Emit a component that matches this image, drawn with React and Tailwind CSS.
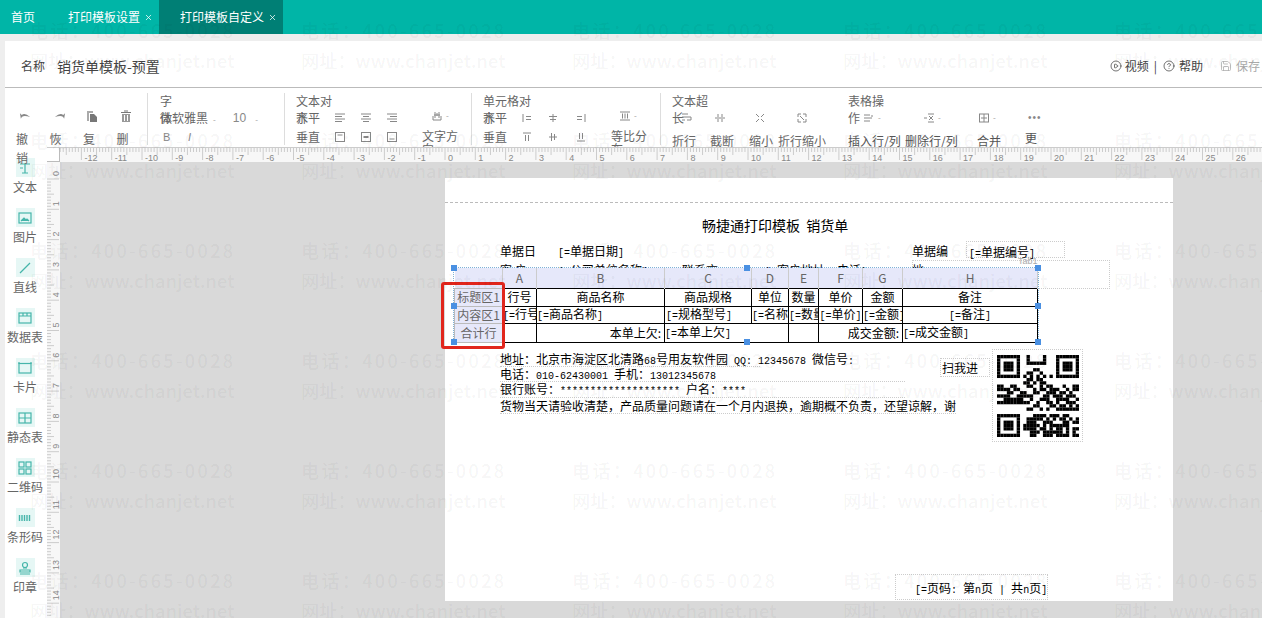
// print template designer page
import { CirclePlay, CircleHelp, Save, X } from "lucide-react";

const CJK = { fontFamily: '"Noto Sans CJK SC", "Noto Sans", sans-serif' };

const QR = [
  "1111111001000010001111111",
  "1000001001000010001000001",
  "1011101001111110001011101",
  "1011101000000000001011101",
  "1011101000011000001011101",
  "1000001001100100001000001",
  "1111111010101010101111111",
  "0000000001101100000000000",
  "0000000011010110000000000",
  "1100110001100101100010011",
  "1111011000010110111001011",
  "0001100110011001110110100",
  "1111001111100011011101110",
  "0011111100100111001111001",
  "1111111111001001101001110",
  "0000000000011000110110101",
  "0000000001100101001111111",
  "0000000000000000000000000",
  "1111111000011110111011000",
  "1000001001111101010110101",
  "1011101001110011100011011",
  "1011101011111010111111000",
  "1011101011110110101101011",
  "1000001000111011111101010",
  "1111111000110011101111011",
];

const QrCode = () => (
  <svg viewBox="0 0 25 25" className="w-[82px] h-[82px]">
    {QR.map((row, y) =>
      row.split("").map((c, x) =>
        c === "1" ? <rect key={x + "-" + y} x={x} y={y} width="1.02" height="1.02" fill="#000" /> : null
      )
    )}
  </svg>
);

const UNIT = 30.3;

const RulerTop = () => {
  const ticks = [];
  for (let i = -130; i <= 270; i++) {
    const x = 385 + (i * UNIT) / 10;
    if (x < 0) continue;
    const h = i % 10 === 0 ? 12 : i % 5 === 0 ? 7 : 4;
    ticks.push(<line key={i} x1={x} x2={x} y1="0" y2={h} stroke="#ccc" strokeWidth="1" />);
  }
  const labels = [];
  for (let i = -12; i <= 26; i++) {
    labels.push(
      <text key={i} x={385 + i * UNIT + 3} y="13" fontSize="9" fill="#888" fontFamily="Liberation Sans">
        {i}
      </text>
    );
  }
  return (
    <svg className="w-[1202px] h-[15px] block">
      {ticks}
      {labels}
    </svg>
  );
};

const RulerLeft = () => {
  const ticks = [];
  for (let i = 0; i <= 150; i++) {
    const y = 17 + (i * UNIT) / 10;
    const w = i % 10 === 0 ? 12 : i % 5 === 0 ? 7 : 4;
    ticks.push(<line key={i} y1={y} y2={y} x1="0" x2={w} stroke="#ccc" strokeWidth="1" />);
  }
  const labels = [];
  for (let i = 0; i <= 14; i++) {
    const y = 17 + i * UNIT - 3;
    labels.push(
      <text
        key={i}
        x="0"
        y="0"
        transform={`translate(12 ${y}) rotate(-90)`}
        fontSize="9"
        fill="#888"
        fontFamily="Liberation Sans"
      >
        {i}
      </text>
    );
  }
  return (
    <svg className="w-[13px] h-[455px] block">
      {ticks}
      {labels}
    </svg>
  );
};

// small grey toolbar glyphs
const G = ({ children, className = "" }) => (
  <svg viewBox="0 0 12 12" fill="none" stroke="#888" strokeWidth="1" className={"w-3 h-3 shrink-0 " + className}>
    {children}
  </svg>
);
const AlignL = () => <G><path d="M1 2h10M1 4.5h7M1 7h10M1 9.5h7" /></G>;
const AlignC = () => <G><path d="M1 2h10M3 4.5h6M1 7h10M3 9.5h6" /></G>;
const AlignR = () => <G><path d="M1 2h10M4 4.5h7M1 7h10M4 9.5h7" /></G>;
const VTop = () => <G><rect x="1.5" y="1.5" width="9" height="9" /><path d="M3.5 4h5" /></G>;
const VMid = () => <G><rect x="1.5" y="1.5" width="9" height="9" /><path d="M3.5 6h5" strokeWidth="2" /></G>;
const VBot = () => <G><rect x="1.5" y="1.5" width="9" height="9" /><path d="M3.5 8h5" /></G>;
const HL = () => <G><path d="M2 2v8M5 4.5h5M5 7.5h5" /></G>;
const HC = () => <G><path d="M6 2v8M2 4.5h8M3 7.5h6" /></G>;
const HR = () => <G><path d="M10 2v8M2 4.5h5M2 7.5h5" /></G>;
const VT = () => <G><path d="M2 2h8M4.5 4v6M7.5 4v6" /></G>;
const VC = () => <G><path d="M2 6h8M4.5 2v8M7.5 3v6" /></G>;
const VB = () => <G><path d="M2 10h8M4.5 2v6M7.5 2v6" /></G>;
const Caret = () => <span className="text-[8px] leading-none text-[#999]">-</span>;

const Divider = () => <div className="w-px h-[52px] mt-[5px] bg-[#ddd] shrink-0" />;

const EditBtn = ({ icon, label }) => (
  <div className="w-[33.5px] shrink-0">
    <div className="h-[20px] mt-[18px] w-[20px] pl-[3px] flex items-center">{icon}</div>
    <div className="w-3 mt-[3px] text-[12px] leading-[19px] text-[#666]">{label}</div>
  </div>
);

const Toolbar = () => (
  <div className="relative z-10 h-[60px] flex pl-[11px] text-[12px] leading-[16px] text-[#666] bg-white border-t border-[#bbb]">
    <div className="flex w-[131px] shrink-0">
      <EditBtn
        label="撤销"
        icon={<svg viewBox="0 0 14 10" className="w-[13px] h-[10px] shrink-0"><path d="M2 8 Q3 3 12 6 Q6 1 3 4 L1 2 Z" fill="#888" /></svg>}
      />
      <EditBtn
        label="恢复"
        icon={<svg viewBox="0 0 14 10" className="w-[13px] h-[10px] shrink-0"><path d="M12 8 Q11 3 2 6 Q8 1 11 4 L13 2 Z" fill="#888" /></svg>}
      />
      <EditBtn
        label="复制"
        icon={<svg viewBox="0 0 12 12" className="w-3 h-3 shrink-0"><path d="M1 1h6v2h-4v8H1z" fill="#aaa" /><path d="M4 4h4l3 3v5H4z" fill="#777" /></svg>}
      />
      <EditBtn
        label="删除"
        icon={<svg viewBox="0 0 12 12" className="w-3 h-3 shrink-0"><path d="M1 2.5h10M4 1h4" stroke="#777" /><path d="M2 4h8v8H2z" fill="#999" /><path d="M4.5 5v6M7.5 5v6" stroke="#fff" /></svg>}
      />
    </div>
    <Divider />

    <div className="w-[136px] pl-[12px] pt-[5px] shrink-0">
      <div>字</div>
      <div className="flex items-center mt-[1px]">
        <span>体</span>
        <span className="-ml-3">微软雅黑</span>
        <span className="ml-[5px]"><Caret /></span>
        <span className="ml-[17px] text-[#888]" style={{ fontFamily: "Liberation Sans" }}>10</span>
        <span className="ml-[9px]"><Caret /></span>
      </div>
      <div className="flex mt-[3px] text-[11px] text-[#888]" style={{ fontFamily: "Liberation Sans" }}>
        <span className="ml-[3px] w-[25px]">B</span>
        <span className="italic">I</span>
      </div>
    </div>
    <Divider />

    <div className="w-[186px] pl-[11px] pt-[5px] flex shrink-0">
      <div className="w-[126px] shrink-0">
        <div>文本对</div>
        <div className="flex items-center mt-[1px]">
          <span>齐</span>
          <span className="-ml-3 w-[38px]">水平</span>
          <span className="w-[26px]"><AlignL /></span>
          <span className="w-[26px]"><AlignC /></span>
          <AlignR />
        </div>
        <div className="flex items-center mt-[3px]">
          <span className="w-[38px]">垂直</span>
          <span className="w-[26px]"><VTop /></span>
          <span className="w-[26px]"><VMid /></span>
          <VBot />
        </div>
      </div>
      <div className="w-[36px] pt-[15px]">
        <div className="flex items-center gap-[3px] pl-[9px] h-[16px]">
          <G><path d="M2 6v4h8V6M4 2v6M8 2v6M6 3v3M3 5h6" /></G>
          <Caret />
        </div>
        <div className="mt-[5px] leading-[13px]">文字方向</div>
      </div>
    </div>
    <Divider />

    <div className="w-[188px] pl-[11px] pt-[5px] flex shrink-0">
      <div className="w-[128px] shrink-0">
        <div>单元格对</div>
        <div className="flex items-center mt-[1px]">
          <span>齐</span>
          <span className="-ml-3 w-[38px]">水平</span>
          <span className="w-[26px]"><HL /></span>
          <span className="w-[28px]"><HC /></span>
          <HR />
        </div>
        <div className="flex items-center mt-[3px]">
          <span className="w-[38px]">垂直</span>
          <span className="w-[26px]"><VT /></span>
          <span className="w-[28px]"><VC /></span>
          <VB />
        </div>
      </div>
      <div className="w-[36px] pt-[15px]">
        <div className="flex items-center gap-[3px] pl-[8px] h-[16px]">
          <G><path d="M1 2h10M1 10h10M3.5 3.5v5M6 3.5v5M8.5 3.5v5" /></G>
          <Caret />
        </div>
        <div className="mt-[5px] leading-[13px]">等比分布</div>
      </div>
    </div>
    <Divider />

    <div className="w-[187px] pl-[11px] pt-[5px] shrink-0">
      <div>文本超</div>
      <div className="flex items-center h-[16px] mt-[1px]">
        <span>长</span>
        <span className="-ml-[3px] w-[33px]"><G><path d="M1 2h6M1 5h9v3H6M1 8h3" /></G></span>
        <span className="w-[40px]"><G><path d="M4 2v3M8 2v3M4 7v3M8 7v3M1 6h10" /></G></span>
        <span className="w-[42px]"><G><path d="M2 2l3 3M10 2L7 5M2 10l3-3M10 10L7 7" /></G></span>
        <G><path d="M2 5V2h3M7 2h3v3M10 7v3H7M5 10H2V7M4 4l4 4" /></G>
      </div>
      <div className="flex mt-[7px]">
        <span className="w-[38px]">折行</span>
        <span className="w-[39px]">截断</span>
        <span className="w-[29px]">缩小</span>
        <span className="whitespace-nowrap">折行缩小</span>
      </div>
    </div>

    <div className="pt-[5px] flex-1">
      <div>表格操</div>
      <div className="flex items-center h-[16px] mt-[1px]">
        <span className="w-[15px]">作</span>
        <span className="flex w-[60px] items-center gap-[3px]"><G><path d="M1 3h6M1 6h8M1 9h6M9 3v2" /></G><Caret /></span>
        <span className="flex w-[55px] items-center gap-[3px]"><G><path d="M1 6h3M5 2h6M5 10h6M6 4l4 4M10 4L6 8" /></G><Caret /></span>
        <span className="flex w-[50px] items-center gap-[3px]"><G><rect x="1.5" y="2" width="9" height="8" /><path d="M6 2v8M3 6h6" /></G><Caret /></span>
        <span className="text-[#888] text-[10px] tracking-[1px]" style={{ fontFamily: "Liberation Sans" }}>•••</span>
      </div>
      <div className="flex mt-[7px] whitespace-nowrap text-[#555]">
        <span className="w-[57px]">插入行/列</span>
        <span className="w-[72px]">删除行/列</span>
        <span className="w-[48px]">合并</span>
        <span className="-mt-[3px]">更</span>
      </div>
    </div>
  </div>
);

const Tool = ({ label, children }) => (
  <div className="h-[50px] flex flex-col items-center">
    <div className="w-[19px] h-[19px] bg-[#e6f7f5] flex items-center justify-center">
      <svg viewBox="0 0 14 14" fill="none" stroke="#45b5aa" strokeWidth="1.2" className="w-[14px] h-[14px]">
        {children}
      </svg>
    </div>
    <div className="text-[12px] leading-[20px] text-[#666] whitespace-nowrap">{label}</div>
  </div>
);

const Sidebar = () => (
  <div className="w-[42px] shrink-0 bg-white pt-[11px] pr-[2px]">
    <Tool label="文本"><path d="M2 3h10M7 3v9M4 12h6M2 7h3" /></Tool>
    <Tool label="图片"><rect x="1" y="2" width="12" height="10" /><path d="M3 10l3-3 2 2 1-1 2 2" fill="#45b5aa" /></Tool>
    <Tool label="直线"><path d="M2 12L12 2" /></Tool>
    <Tool label="数据表"><rect x="1" y="2" width="12" height="10" /><path d="M1 5h12M5 2v3M9 2v3" /></Tool>
    <Tool label="卡片"><rect x="1" y="2.5" width="12" height="9.5" /><path d="M1 1v2M13 1v2" /></Tool>
    <Tool label="静态表"><rect x="1" y="2" width="12" height="10" /><path d="M1 7h12M7 2v10" /></Tool>
    <Tool label="二维码"><rect x="1" y="1" width="5" height="5" /><rect x="8" y="1" width="5" height="5" /><rect x="1" y="8" width="5" height="5" /><rect x="8" y="8" width="5" height="5" /></Tool>
    <Tool label="条形码"><path d="M1.5 4v6M4 4v6M6.5 4v6M9 4v6M11.5 4v6" strokeWidth="1.4" /></Tool>
    <Tool label="印章"><circle cx="7" cy="4" r="2.5" /><path d="M5 7h4M2 9h10v2H2zM2 13h10" /></Tool>
  </div>
);

const td = "border border-black p-0 overflow-hidden whitespace-nowrap text-center text-black font-normal";
const rowHead = "border border-[#bbb] bg-[#e6e8fa] p-0 text-center text-[#666] font-normal whitespace-nowrap overflow-hidden";

const Handle = ({ className }) => <div className={"absolute w-[6px] h-[6px] bg-[#4a90e2] " + className} />;

const Mono = ({ children }) => (
  <span className="text-[10px] leading-none whitespace-pre" style={{ fontFamily: '"Liberation Mono", monospace' }}>
    {children}
  </span>
);

// template field such as [=金额], brackets are half width
const F = ({ children }) => (
  <>
    <Mono>[=</Mono>
    {children}
    <Mono>]</Mono>
  </>
);

const DesignTable = () => (
  <div className="absolute left-[8px] top-[89px] w-[586px] h-[76px] border border-dotted border-[#7fb2d8] z-10">
    <table className="table-fixed border-collapse w-[584px] text-[12px] leading-[14px]">
      <colgroup>
        <col className="w-[48px]" />
        <col className="w-[34px]" />
        <col className="w-[128px]" />
        <col className="w-[87px]" />
        <col className="w-[37px]" />
        <col className="w-[30px]" />
        <col className="w-[44px]" />
        <col className="w-[40px]" />
        <col className="w-[135px]" />
      </colgroup>
      <tbody>
        <tr className="h-[20px]">
          <td className="bg-[#e6e8fa]" />
          {["A", "B", "C", "D", "E", "F", "G", "H"].map((c) => (
            <td key={c} className="bg-[#e6e8fa] border-x border-[#ccc] text-center text-[#666]">{c}</td>
          ))}
        </tr>
        <tr className="h-[18px]">
          <td className={rowHead}>标题区1</td>
          <td className={td}>行号</td>
          <td className={td}>商品名称</td>
          <td className={td}>商品规格</td>
          <td className={td}>单位</td>
          <td className={td}>数量</td>
          <td className={td}>单价</td>
          <td className={td}>金额</td>
          <td className={td}>备注</td>
        </tr>
        <tr className="h-[17px]">
          <td className={rowHead}>内容区1</td>
          <td className={td + " text-left"}><F>行号</F></td>
          <td className={td + " text-left"}><F>商品名称</F></td>
          <td className={td + " text-left pl-[1px]"}><F>规格型号</F></td>
          <td className={td + " text-left"}><F>名称</F></td>
          <td className={td + " text-left"}><F>数量</F></td>
          <td className={td}><F>单价</F></td>
          <td className={td}><F>金额</F></td>
          <td className={td}><F>备注</F></td>
        </tr>
        <tr className="h-[19px]">
          <td className={rowHead}>合计行</td>
          <td className={td} />
          <td className={td + " text-right pr-[3px]"}>本单上欠:</td>
          <td className={td + " text-left"} colSpan="2"><F>本单上欠</F></td>
          <td className={td} />
          <td className={td + " text-right pr-[3px]"} colSpan="2">成交金额:</td>
          <td className={td + " text-left"}><F>成交金额</F></td>
        </tr>
      </tbody>
    </table>
    <Handle className="-left-[3px] -top-[3px]" />
    <Handle className="-left-[3px] top-[35px]" />
    <Handle className="-left-[3px] -bottom-[3px]" />
    <Handle className="left-[290px] -top-[3px]" />
    <Handle className="left-[290px] -bottom-[3px]" />
    <Handle className="-right-[3px] -top-[3px]" />
    <Handle className="-right-[3px] top-[35px]" />
    <Handle className="-right-[3px] -bottom-[3px]" />
  </div>
);

const Paper = () => (
  <div className="relative ml-[385px] mt-[16px] w-[728px] h-[423px] bg-white text-[12px] leading-[16px] text-black whitespace-nowrap">
    <div className="absolute left-0 right-0 top-[24px] border-t border-dashed border-[#bbb]" />
    <div className="absolute left-[257px] top-[37px] text-[14px] leading-[20px]">畅捷通打印模板<span className="whitespace-pre">  </span>销货单</div>

    <div className="absolute left-[55px] top-[65px]">单据日</div>
    <div className="absolute left-[113px] top-[65px]"><F>单据日期</F></div>
    <div className="absolute left-[467px] top-[65px]">单据编</div>
    <div className="absolute left-[521px] top-[63px] w-[99px] h-[17px] pl-[2px] pt-[2px] border border-dotted border-[#ccc]"><F>单据编号</F></div>

    <div className="absolute left-[55px] top-[84px]">客 户</div>
    <div className="absolute left-[113px] top-[84px]"><F>公司单位名称</F></div>
    <div className="absolute left-[237px] top-[84px]">联系方</div>
    <div className="absolute left-[320px] top-[84px]"><F>客户地址、电话</F></div>
    <div className="absolute left-[467px] top-[84px]">地</div>
    <div className="absolute left-[467px] top-[82px] w-[198px] h-[29px] border border-dotted border-[#ccc]" />
    <div className="absolute left-[573px] top-[78px] text-[9px] leading-[10px] text-[#aaa] z-20" style={{ fontFamily: "Liberation Sans" }}>Tab1</div>

    <DesignTable />

    <div className="absolute left-[55px] top-[173px] w-[260px] h-[16px] border-b border-dotted border-[#ccc]">
      地址：北京市海淀区北清路<Mono>68</Mono>号用友软件园<Mono> QQ: 12345678 </Mono>微信号<Mono>:</Mono>
    </div>
    <div className="absolute left-[55px] top-[188px] w-[405px] h-[16px] border-b border-dotted border-[#ccc]">
      电话：<Mono>010-62430001 </Mono>手机：<Mono>13012345678</Mono>
    </div>
    <div className="absolute left-[55px] top-[203px] w-[405px] h-[17px] border-b border-dotted border-[#ccc]">
      银行账号：<Mono>******************** </Mono>户名：<Mono>****</Mono>
    </div>
    <div className="absolute left-[55px] top-[220px] w-[456px] h-[16px] border-b border-dotted border-[#ccc]">
      货物当天请验收清楚，产品质量问题请在一个月内退换，逾期概不负责，还望谅解，谢
    </div>

    <div className="absolute left-[495px] top-[180px] w-[50px] h-[19px] pl-[1px] pt-[1px] border border-dotted border-[#ccc]">扫我进</div>
    <div className="absolute left-[547px] top-[171px] w-[91px] h-[93px] border border-dotted border-[#ccc] flex items-center justify-center">
      <QrCode />
    </div>

    <div className="absolute left-[450px] top-[396px] w-[153px] h-[26px] pl-[19px] pt-[5px] border border-dotted border-[#ccc]">
      <Mono>[=</Mono>页码<Mono>: </Mono>第<Mono>n</Mono>页<Mono> | </Mono>共<Mono>n</Mono>页<Mono>]</Mono>
    </div>

    <div className="absolute left-[-4px] top-[104px] w-[64px] h-[67px] border-[3px] border-[#e1261c] rounded-[3px] z-20" />
  </div>
);

const Watermark = () => (
  <div className="absolute inset-0 z-30 pointer-events-none overflow-hidden pl-[30px] pt-[15px] grid grid-cols-[repeat(5,271px)] auto-rows-[110px] text-[18px] leading-[30px] font-medium text-black/[0.05] whitespace-nowrap">
    {Array.from({ length: 30 }).map((_, i) => (
      <div key={i}>
        <div className="tracking-[2.4px]">电话：400-665-0028</div>
        <div className="tracking-[0.2px]">网址：www.chanjet.net</div>
      </div>
    ))}
  </div>
);

export default function App() {
  return (
    <div className="relative w-[1262px] h-[618px] overflow-hidden bg-[#eeeeee]" style={CJK}>
      <div className="h-[34px] bg-[#00b5a7] flex items-center text-[12px] text-white whitespace-nowrap">
        <span className="ml-[11px]">首页</span>
        <span className="ml-[33px]">打印模板设置</span>
        <X size={9} className="ml-[4px]" />
        <div className="ml-[6px] h-full w-[124px] bg-[#007f75] pl-[21px] flex items-center">
          <span>打印模板自定义</span>
          <X size={9} className="ml-[4px]" />
        </div>
      </div>

      <div className="mt-[7px] ml-[5px] h-[577px] flex flex-col">
        <div className="h-[46px] bg-white flex items-center pl-[16px] pt-[4px] text-[14px] text-[#444] whitespace-nowrap">
          <span className="text-[12px]">名称</span>
          <span className="ml-[12px]">销货单模板-预置</span>
          <div className="ml-auto flex items-center text-[12px]">
            <CirclePlay size={12} strokeWidth={1.5} />
            <span className="ml-[3px]">视频</span>
            <span className="ml-[5px]">|</span>
            <CircleHelp size={12} strokeWidth={1.5} className="ml-[6px]" />
            <span className="ml-[4px]">帮助</span>
            <Save size={12} strokeWidth={1.5} className="ml-[17px] text-[#aaa]" />
            <span className="ml-[4px] mr-[2px] text-[#aaa]">保存</span>
          </div>
        </div>

        <Toolbar />

        <div className="flex flex-1 min-h-0">
          <Sidebar />
          <div className="relative z-20 flex-1 flex flex-col min-w-0">
            <div className="h-[15px] flex border-t border-[#ccc] bg-[#f7f7f7] shrink-0">
              <div className="w-[13px] shrink-0 bg-white border-r border-b border-[#bbb]" />
              <RulerTop />
            </div>
            <div className="flex flex-1 min-h-0">
              <div className="w-[13px] shrink-0 bg-[#f7f7f7] overflow-hidden">
                <RulerLeft />
              </div>
              <div className="flex-1 bg-[#d9d9d9] overflow-hidden flow-root">
                <Paper />
              </div>
            </div>
          </div>
        </div>
      </div>
      <Watermark />
    </div>
  );
}
